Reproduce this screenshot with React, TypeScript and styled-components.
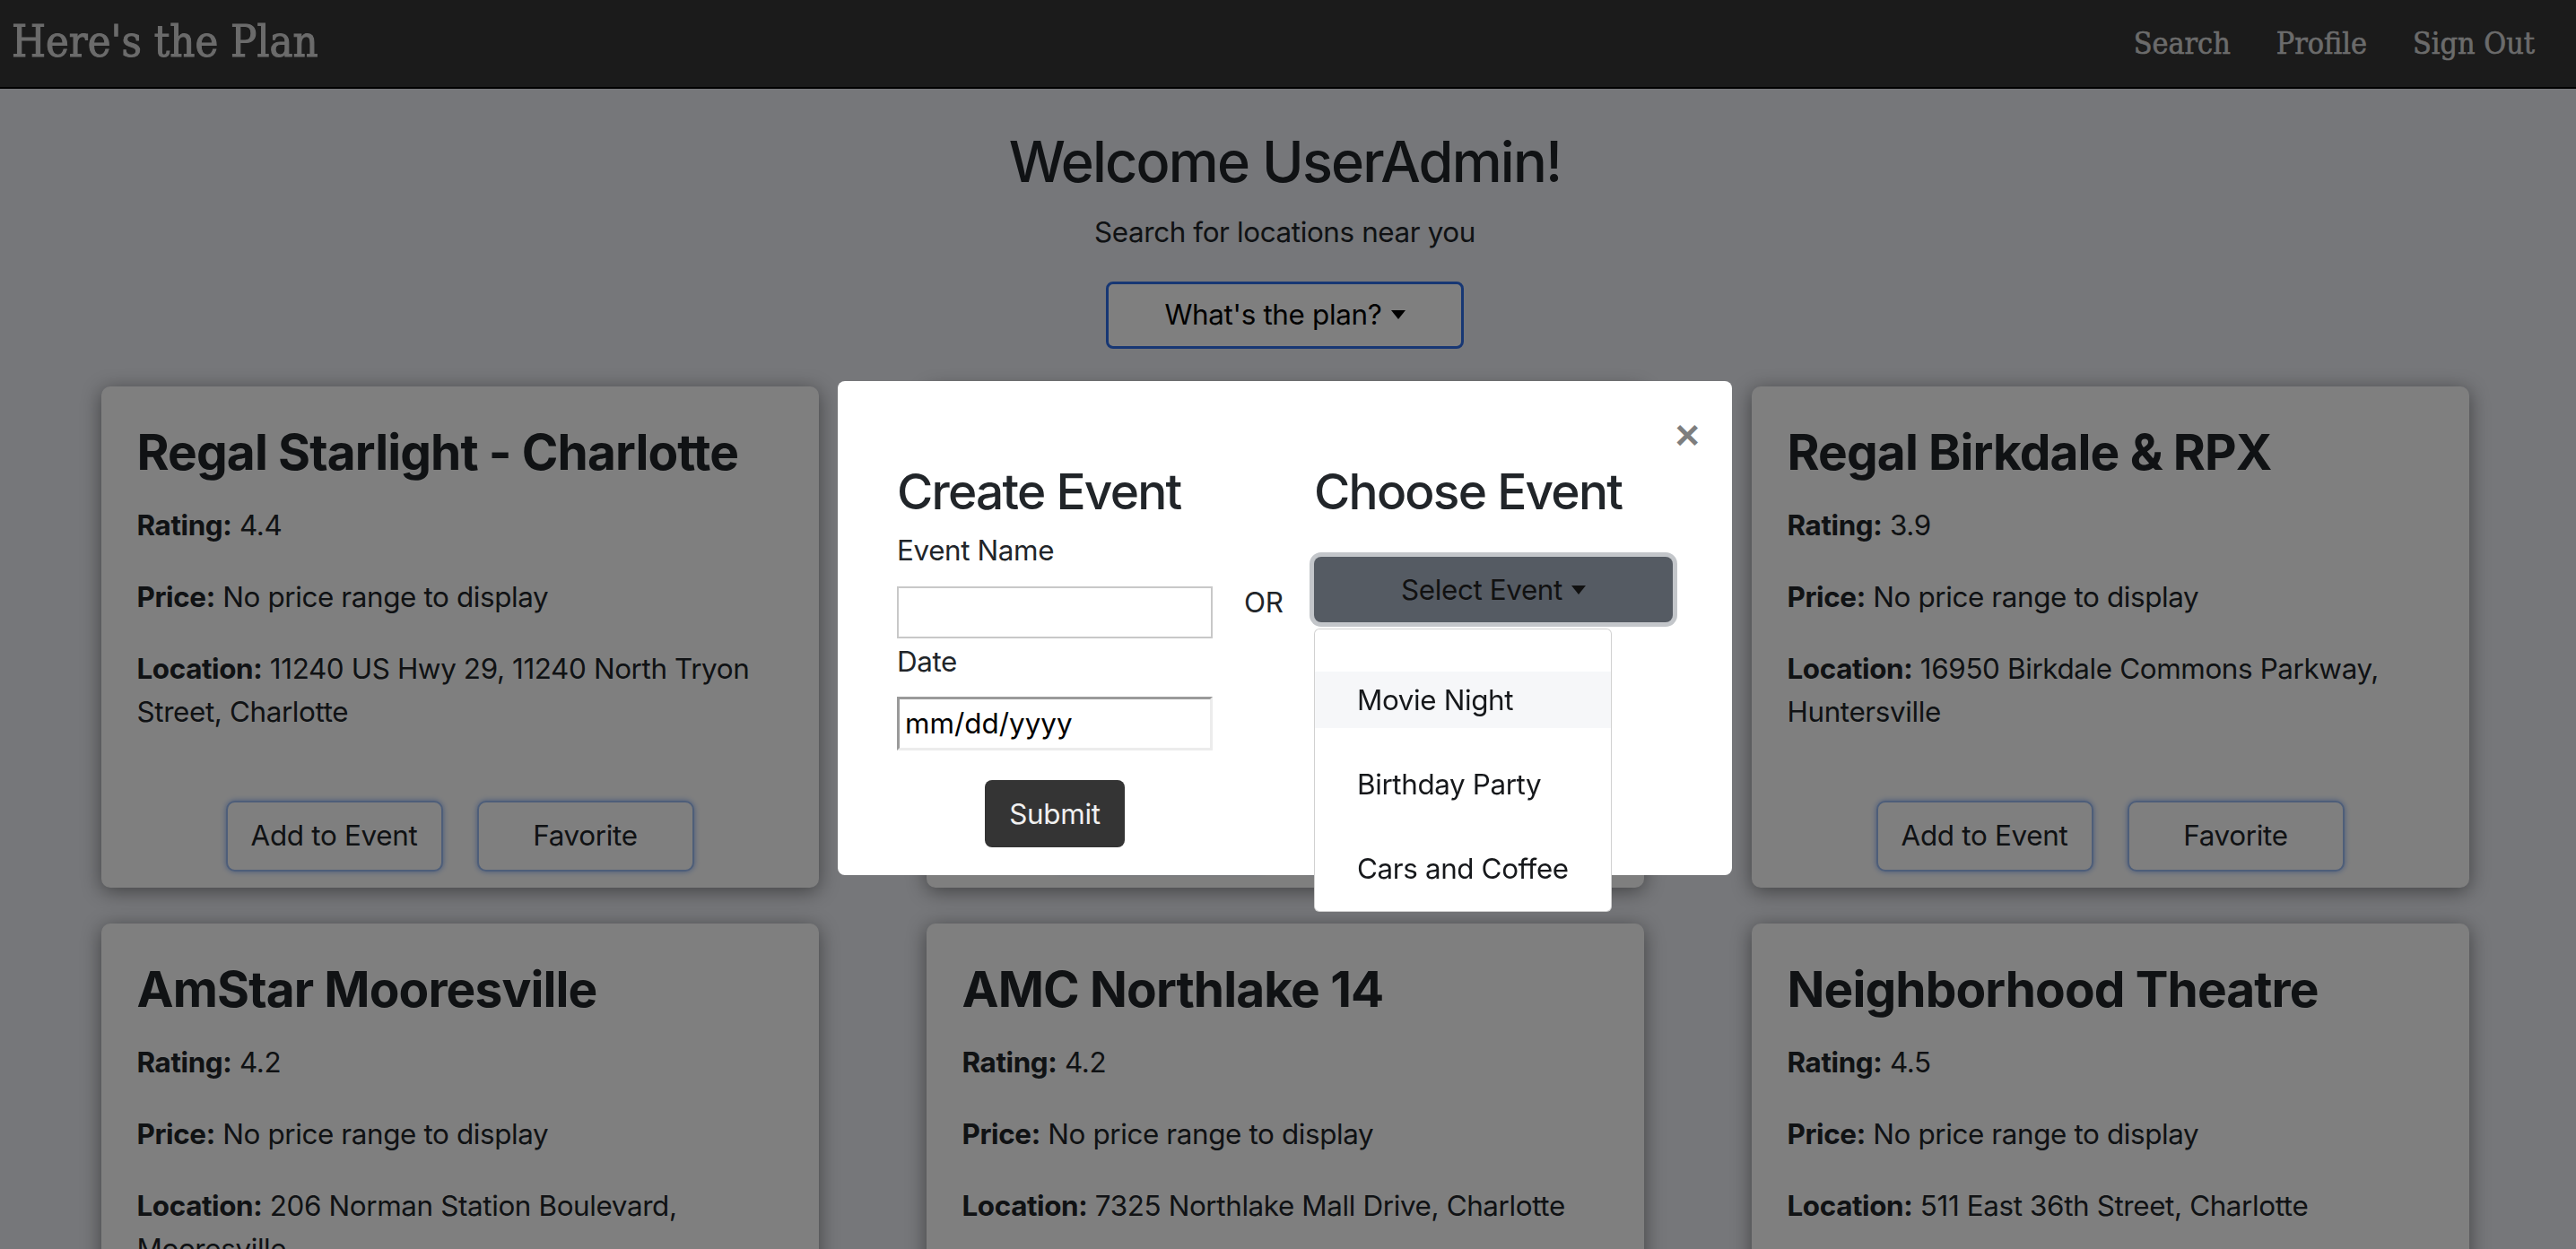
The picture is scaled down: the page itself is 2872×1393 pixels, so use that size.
import React from "react";
import styled, { createGlobalStyle } from "styled-components";

const GlobalStyle = createGlobalStyle`
  html, body {
    margin: 0;
    padding: 0;
    background: #eceef4;
    height: 100%;
    overflow: hidden;
  }
  body {
    font-family: Inter, "Liberation Sans", sans-serif;
    font-size: 31.4px;
    line-height: 48px;
    color: #212529;
  }
  * { box-sizing: border-box; }
`;

const Navbar = styled.nav`
  height: 99px;
  background: #363636;
  border-bottom: 2px solid #000;
  display: flex;
  align-items: center;
  justify-content: space-between;
  padding: 0 46px 0 13px;
`;

const Brand = styled.div`
  font-family: "DejaVu Serif Condensed", "DejaVu Serif", serif;
  font-size: 48.5px;
  font-weight: 500;
  color: #d6d6d6;
  -webkit-text-stroke: 1px #d6d6d6;
  line-height: 1;
  padding-bottom: 4px;
`;

const NavLinks = styled.div`
  display: flex;
  gap: 51px;
`;

const NavLink = styled.a`
  font-family: "DejaVu Serif Condensed", "DejaVu Serif", serif;
  font-size: 33.8px;
  color: #d6d6d6;
  -webkit-text-stroke: 0.6px #d6d6d6;
  text-decoration: none;
  line-height: 1;
`;

const Main = styled.main`
  display: flex;
  flex-direction: column;
  align-items: center;
  padding-right: 7px;
`;

const Headline = styled.h2`
  margin: 44px 0 16px;
  font-size: 63px;
  font-weight: 500;
  line-height: 1.2;
  letter-spacing: -0.029em;
`;

const Sub = styled.p`
  margin: 0 0 31px;
  letter-spacing: -0.012em;
`;

const Caret = styled.span`
  display: inline-block;
  margin-left: 10px;
  vertical-align: 6px;
  border-top: 10px solid currentColor;
  border-left: 8px solid transparent;
  border-right: 8px solid transparent;
`;

const PlanButton = styled.button`
  width: 399px;
  height: 75px;
  background: #fff;
  border: 3px solid #2f6fe8;
  border-radius: 8px;
  font: inherit;
  color: #000;
  letter-spacing: -0.01em;
  margin-bottom: 42px;
`;

const Grid = styled.div`
  display: grid;
  grid-template-columns: repeat(3, 800px);
  column-gap: 120px;
  row-gap: 40px;
  justify-content: center;
`;

const Card = styled.div`
  background: #fff;
  border-radius: 10px;
  box-shadow: 0 4px 22px rgba(0, 0, 0, 0.45);
  padding: 40px 40px 18px;
  display: flex;
  flex-direction: column;
  min-height: 559px;
`;

const CardTitle = styled.h3`
  margin: 0 0 25px;
  font-size: 55px;
  font-weight: 700;
  line-height: 1.2;
  letter-spacing: -0.016em;
`;

const Line = styled.p`
  margin: 0 0 32px;
  letter-spacing: -0.012em;
  b { font-weight: 700; }
`;

const CardActions = styled.div`
  margin-top: auto;
  display: flex;
  justify-content: center;
  gap: 38px;
`;

const OutlineButton = styled.button`
  width: 242px;
  height: 79px;
  background: #fff;
  border: 2px solid #9dbcf2;
  box-shadow: 0 0 6px rgba(40, 110, 240, 0.55);
  border-radius: 10px;
  font: inherit;
  color: #212529;
  letter-spacing: -0.01em;
`;

const Backdrop = styled.div`
  position: fixed;
  inset: 0;
  background: rgba(0, 0, 0, 0.5);
  display: flex;
  justify-content: center;
  align-items: flex-start;
  padding: 425px 7px 0 0;
`;

const Modal = styled.div`
  width: 997px;
  height: 551px;
  background: #fff;
  border-radius: 8px;
  display: flex;
  flex-direction: column;
`;

const ModalHeader = styled.div`
  height: 90px;
  display: flex;
  justify-content: flex-end;
  align-items: flex-start;
  padding: 36px 36px 0 0;
`;

const Close = styled.button`
  background: none;
  border: none;
  padding: 0;
  font: inherit;
  font-family: "Liberation Sans", sans-serif;
  font-size: 47px;
  font-weight: 700;
  line-height: 48px;
  color: #000;
  opacity: 0.5;
`;

const ModalBody = styled.div`
  display: flex;
  align-items: flex-start;
  padding: 0 66px;
  gap: 35px;
`;

const Column = styled.div<{ $w: number }>`
  width: ${(p) => p.$w}px;
  display: flex;
  flex-direction: column;
  position: relative;
`;

const ModalTitle = styled.h3<{ $mb: number }>`
  margin: 0 0 ${(p) => p.$mb}px;
  font-size: 55px;
  font-weight: 500;
  line-height: 1.2;
  letter-spacing: -0.032em;
`;

const Label = styled.label<{ $mb: number }>`
  margin-bottom: ${(p) => p.$mb}px;
  letter-spacing: -0.012em;
`;

const TextInput = styled.input`
  width: 352px;
  height: 58px;
  border: 2px solid #c8c8c8;
  margin: 2px 0 2px;
  font: inherit;
`;

const DateInput = styled.input`
  width: 352px;
  height: 60px;
  margin-top: 2px;
  border-style: solid;
  border-width: 3px;
  border-color: #9a9a9a #ececec #ececec #9a9a9a;
  padding: 0 0 0 6px;
  font: inherit;
  color: #000;
  &::placeholder { color: #000; opacity: 1; }
`;

const Submit = styled.button`
  align-self: center;
  margin-top: 33px;
  width: 156px;
  height: 75px;
  background: #343434;
  color: #f0f0f0;
  border: none;
  border-radius: 8px;
  font: inherit;
  letter-spacing: -0.01em;
`;

const Or = styled.div`
  margin-top: 133px;
  width: 43px;
  letter-spacing: -0.01em;
`;

const SelectButton = styled.button`
  width: 400px;
  height: 73px;
  background: #555b63;
  border: none;
  border-radius: 8px;
  box-shadow: 0 0 0 5px #c3c6ca;
  font: inherit;
  color: #111;
  letter-spacing: -0.012em;
`;

const Menu = styled.div`
  position: absolute;
  top: calc(100% + 7px);
  left: 0;
  width: 332px;
  background: #fff;
  border: 1px solid rgba(0, 0, 0, 0.18);
  border-radius: 6px;
  padding: 16px 0;
  display: flex;
  flex-direction: column;
  gap: 31px;
  &::before { content: ""; height: 0; }
`;

const MenuItem = styled.div<{ $active?: boolean }>`
  height: 63px;
  display: flex;
  align-items: center;
  padding: 0 47px;
  background: ${(p) => (p.$active ? "#f6f7f9" : "transparent")};
  color: #16181b;
  letter-spacing: -0.012em;
  white-space: nowrap;
`;

const cards = [
  { name: "Regal Starlight - Charlotte", rating: "4.4", loc: "11240 US Hwy 29, 11240 North Tryon Street, Charlotte" },
  { name: "AMC Concord Mills 24", rating: "4.3", loc: "8421 Concord Mills Boulevard, Concord" },
  { name: "Regal Birkdale & RPX", rating: "3.9", loc: "16950 Birkdale Commons Parkway, Huntersville" },
  { name: "AmStar Mooresville", rating: "4.2", loc: "206 Norman Station Boulevard, Mooresville" },
  { name: "AMC Northlake 14", rating: "4.2", loc: "7325 Northlake Mall Drive, Charlotte" },
  { name: "Neighborhood Theatre", rating: "4.5", loc: "511 East 36th Street, Charlotte" },
];

export default function App() {
  return (
    <>
      <GlobalStyle />
      <Navbar>
        <Brand>Here's the Plan</Brand>
        <NavLinks>
          <NavLink href="#">Search</NavLink>
          <NavLink href="#">Profile</NavLink>
          <NavLink href="#">Sign Out</NavLink>
        </NavLinks>
      </Navbar>
      <Main>
        <Headline>Welcome UserAdmin!</Headline>
        <Sub>Search for locations near you</Sub>
        <PlanButton>
          What's the plan?
          <Caret />
        </PlanButton>
        <Grid>
          {cards.map((c) => (
            <Card key={c.name}>
              <CardTitle>{c.name}</CardTitle>
              <Line>
                <b>Rating:</b> {c.rating}
              </Line>
              <Line>
                <b>Price:</b> No price range to display
              </Line>
              <Line>
                <b>Location:</b> {c.loc}
              </Line>
              <CardActions>
                <OutlineButton>Add to Event</OutlineButton>
                <OutlineButton>Favorite</OutlineButton>
              </CardActions>
            </Card>
          ))}
        </Grid>
      </Main>
      <Backdrop>
        <Modal>
          <ModalHeader>
            <Close>×</Close>
          </ModalHeader>
          <ModalBody>
            <Column $w={352}>
              <ModalTitle $mb={9}>Create Event</ModalTitle>
              <Label $mb={14}>Event Name</Label>
              <TextInput />
              <Label $mb={13}>Date</Label>
              <DateInput placeholder="mm/dd/yyyy" />
              <Submit>Submit</Submit>
            </Column>
            <Or>OR</Or>
            <Column $w={400}>
              <ModalTitle $mb={40}>Choose Event</ModalTitle>
              <SelectButton>
                Select Event
                <Caret />
              </SelectButton>
              <Menu>
                <MenuItem $active>Movie Night</MenuItem>
                <MenuItem>Birthday Party</MenuItem>
                <MenuItem>Cars and Coffee</MenuItem>
              </Menu>
            </Column>
          </ModalBody>
        </Modal>
      </Backdrop>
    </>
  );
}
